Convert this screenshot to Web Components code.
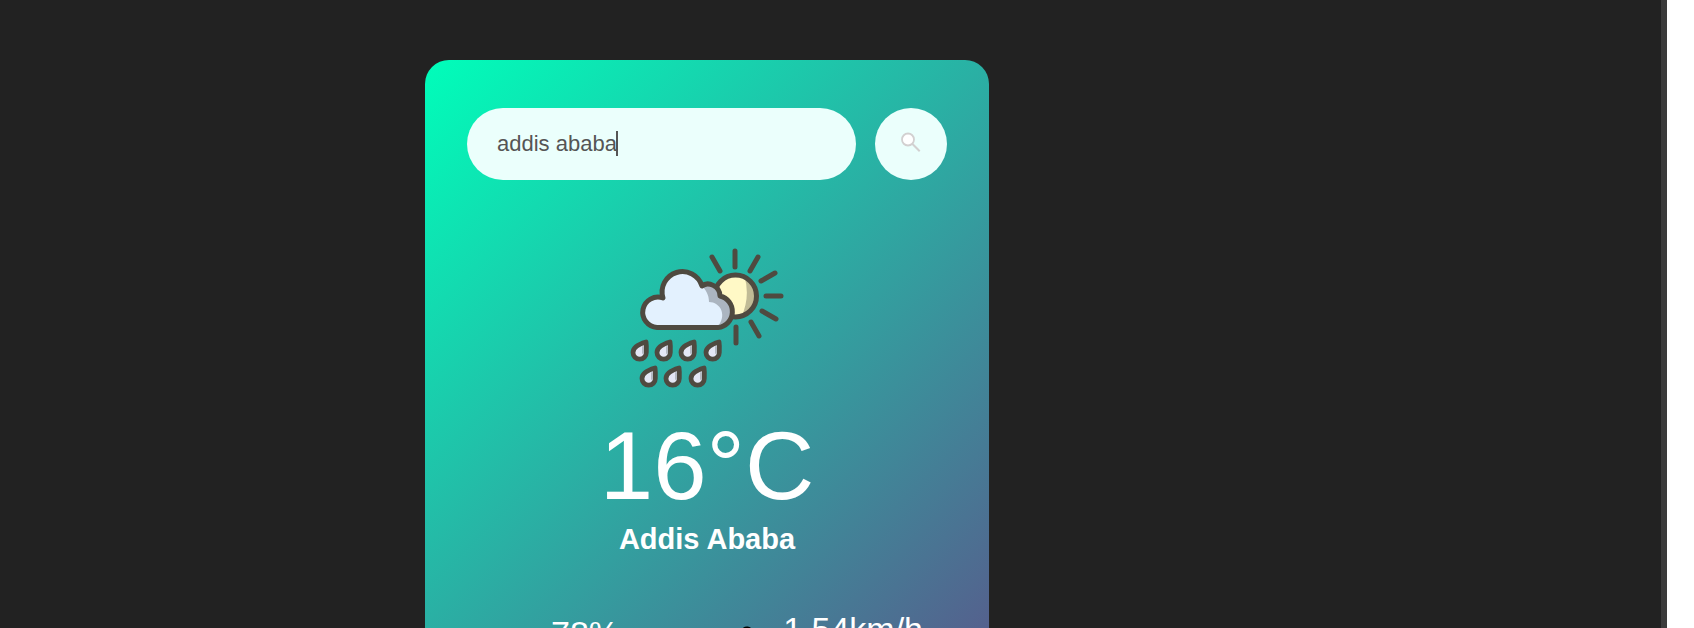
<!DOCTYPE html>
<html lang="en">
<head>
<meta charset="utf-8">
<title>Weather</title>
<style>
html,body{margin:0;height:100%;overflow:hidden;background:#fff;font-family:"Liberation Sans",Arial,sans-serif}
</style>
</head>
<body>
<weather-app></weather-app>
<script>
const define = (name, html) => customElements.define(name, class extends HTMLElement {
  constructor(){ super(); this.attachShadow({mode:'open'}).innerHTML = html; }
});

define('search-bar', `
<style>
:host{display:block}
form{display:flex;gap:19px;margin:0}
input,button{box-sizing:border-box;height:72px;border:0;outline:0;background:#ebfffc;color:#555;font:22px "Liberation Sans",Arial,sans-serif}
.field{flex:1;min-width:0;display:grid}
input{width:100%;padding:12px 30px;border-radius:36px;grid-area:1/1}
.caret{grid-area:1/1;align-self:center;display:flex;padding:0 0 2px 30px;pointer-events:none}
.caret::after{content:"";width:2px;height:25px;background:#555;margin-left:119px}
button{width:72px;padding:0;border-radius:50%;display:grid;place-items:center}
svg{width:26px;height:26px;display:block}
</style>
<form>
  <div class="field"><input type="text" aria-label="City name" value="addis ababa" spellcheck="false"><span class="caret"></span></div>
  <button type="button" aria-label="Search"><svg viewBox="0 0 26 26"><path d="M14 12.500l7.700 7.700" stroke="#d2d0d0" stroke-width="2"/><circle cx="10" cy="8.500" r="6" fill="#fff" stroke="#d2d0d0" stroke-width="1.800"/></svg></button>
</form>`);

define('rain-icon', `
<style>:host{display:block}svg{display:block;width:100%;height:100%}</style>
<svg viewBox="0 0 204 204" fill="none" stroke="#4f4a40" stroke-width="5" stroke-linecap="round" stroke-linejoin="round" aria-hidden="true">
  <defs>
    <clipPath id="sun"><circle cx="130.500" cy="80" r="21"/></clipPath>
    <g id="drop"><path d="M15 3C8 5 2 8 2 13.500A6.500 6.500 0 0 0 15.300 13.500C15.500 9 15.500 6 15 3Z" fill="#e4e7f5" stroke-width="4.800"/><path d="M12 8V14" stroke="#b5bac3" stroke-width="2"/></g>
  </defs>
  <circle cx="130.500" cy="80" r="21" fill="#fff9c6" stroke="none"/>
  <path clip-path="url(#sun)" d="M138 56Q147 80 135 104H158V56Z" fill="#c0bb96" stroke="none"/>
  <circle cx="130.500" cy="80" r="21"/>
  <path d="M130 35v16M107 41l8 14M153 41l-8 14M170 57l-14 8M161 80h15M157 95l14 8M146 106l8 14M131 111v16"/>
  <path d="M58 82A20 20 0 0 1 97 70C103 65 115 70 115 80A16 16 0 0 1 113 111.500H52A15.200 15.200 0 1 1 58 82Z" fill="#abb5c0" stroke="none"/>
  <path d="M58 82A20 20 0 0 1 97 70C101 74 104 79 104 86C115 86 123 99 112 111.500H52A15.200 15.200 0 1 1 58 82Z" fill="#e3f1fe" stroke="none"/>
  <path d="M58 82A20 20 0 0 1 97 70C103 65 115 70 115 80A16 16 0 0 1 113 111.500H52A15.200 15.200 0 1 1 58 82Z"/>
  <use href="#drop" x="26" y="123"/><use href="#drop" x="50" y="123"/><use href="#drop" x="74" y="123"/><use href="#drop" x="99" y="123"/>
  <use href="#drop" x="35" y="149"/><use href="#drop" x="59" y="149"/><use href="#drop" x="84" y="149"/>
</svg>`);

define('weather-stat', `
<style>
:host{display:flex;align-items:center;gap:12px;text-align:left}
.icon{width:48px}
.value{margin:0;font-size:34px;line-height:38px}
.label{margin:0;font-size:19px;line-height:22px}
</style>
<div class="icon"><slot name="icon"></slot></div>
<div><p class="value"><slot></slot></p><p class="label"><slot name="label"></slot></p></div>`);

define('weather-card', `
<style>
:host{display:block;box-sizing:border-box;border-radius:24px;padding:48px 42px;background:linear-gradient(135deg,#00feba,#5b548a);color:#fff;text-align:center}
rain-icon{width:204px;height:204px;margin:36px auto 0}
h1{font-size:96px;line-height:92px;font-weight:400;margin:0}
h2{font-size:29px;line-height:34px;font-weight:700;margin:10px 0 0}
.stats{display:flex;justify-content:space-between;align-items:flex-start;margin-top:54px;padding:0 24px}
weather-stat svg{display:block;width:48px;height:48px}
.humidity{margin-top:4px}
</style>
<search-bar></search-bar>
<rain-icon></rain-icon>
<h1>16°C</h1>
<h2>Addis Ababa</h2>
<div class="stats">
  <weather-stat class="humidity"><svg slot="icon" viewBox="0 0 48 48" fill="none" stroke="#000" stroke-width="3"><path d="M24 12C18 21 13 26 13 33a11 11 0 0 0 22 0C35 26 30 21 24 12Z"/></svg>78%<span slot="label">Humidity</span></weather-stat>
  <weather-stat><svg slot="icon" viewBox="0 0 48 48" fill="none" stroke="#000" stroke-width="3" stroke-linecap="round"><path d="M4 22h20a5 5 0 1 0-5-6M4 28h34a6 6 0 1 1-6 7M4 34h18"/></svg>1.54km/h<span slot="label">Wind Speed</span></weather-stat>
</div>`);

define('weather-app', `
<style>
:host{display:flex;height:100vh;margin-right:27px;box-sizing:border-box;border-right:6px solid #3b3b3b;background:#222;overflow:hidden}
main{flex:1;display:flex;align-items:flex-start;padding:60px 0 0 425px}
weather-card{flex:0 1 564px}
</style>
<main><weather-card></weather-card></main>`);
</script>
</body>
</html>
